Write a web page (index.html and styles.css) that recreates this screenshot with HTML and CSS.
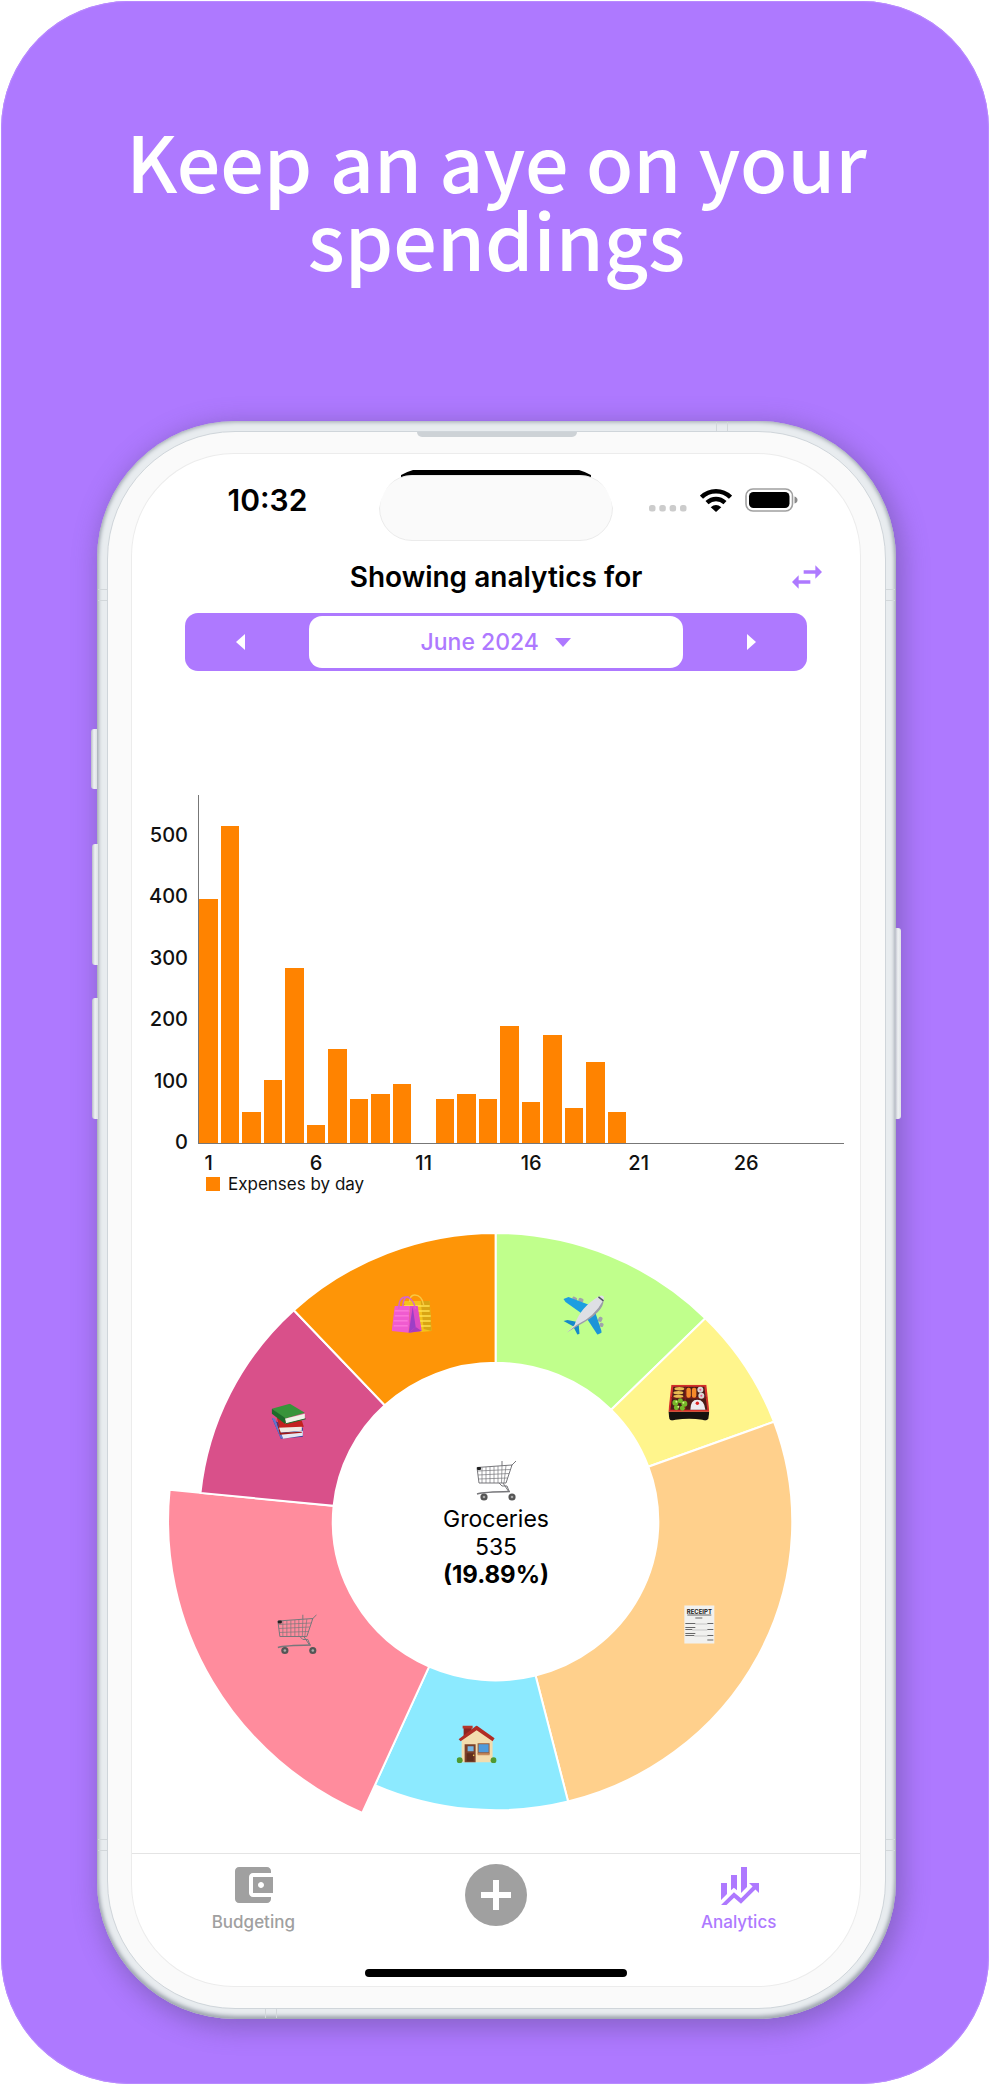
FILE: index.html
```html
<!DOCTYPE html>
<html lang="en">
<head>
<meta charset="utf-8">
<meta name="viewport" content="width=device-width, initial-scale=1">
<title>Keep an aye on your spendings</title>
<link rel="stylesheet" href="styles.css">
</head>
<body>
<svg class="defs" aria-hidden="true">
  <symbol id="cart" viewBox="0 0 40 40">
    <g fill="none" stroke="#77777b" stroke-width="1">
      <path d="M1 6.500 36 4 30 22H3z"/>
      <path stroke-width=".7" d="M1.500 10 34.500 8.500M2 14 33 12.500M2.500 18 31.500 17M6 6.500V22M10 6V22M14 6V22M18 5.500V22M22 5V22M26 5 25.500 22M30 4.500 28 22"/>
      <path d="M35 5 40 0M26 0V5M23 22l3 3h5l2 5M27 22l6 9"/>
      <path stroke-width="1.400" d="M1 33q6-2 33-2.500"/>
    </g>
    <rect x="1" y="6" width="4" height="3" rx="1" fill="#222"/>
    <g fill="#555"><circle cx="8" cy="36" r="3.600"/><circle cx="36" cy="36" r="3.600"/></g>
    <g fill="#aaa"><circle cx="8" cy="36" r="1.300"/><circle cx="36" cy="36" r="1.300"/></g>
  </symbol>
  <symbol id="bags" viewBox="0 0 40 40">
    <path d="M11 7h27l2 30-11 1z" fill="#f4c21c"/>
    <path d="M29 7h9l2 30-8-2z" fill="#d9a514"/>
    <path d="M12 12h26M12 17h26M20 22h19M20 27h19M20 32h19" stroke="#ffe04d" stroke-width="1.500"/>
    <path d="M18 8q0-7 5-7 7 0 9 10" fill="none" stroke="#f8c843" stroke-width="1.500"/>
    <path d="M3 12h15L17 39 0 37z" fill="#f05bd0"/>
    <path d="M18 12h8l4 25-13 2z" fill="#e04cc4"/>
    <path d="M21 13 17 39l7-6z" fill="#9d3fc6"/>
    <path d="M24 33l6 4-13 2z" fill="#a93cc0"/>
    <path d="M3 17h14M3 22h14M2 27h14M2 32h14" stroke="#ff86e0" stroke-width="1"/>
    <path d="M7 15Q7 3 14 3t10 12M11 12q1-10 6-9" fill="none" stroke="#d667c8" stroke-width="1.500"/>
  </symbol>
  <symbol id="plane" viewBox="0 0 42 40">
    <g fill="#a0a3ab"><rect x="10" y="2" width="5" height="3" rx="1.500" transform="rotate(25 12 3)"/><rect x="16" y="3" width="5" height="4" rx="1.500" transform="rotate(25 18 5)"/><rect x="36" y="22" width="4" height="5" rx="1.500" transform="rotate(25 38 24)"/><rect x="37" y="28" width="4" height="4" rx="1.500" transform="rotate(25 39 30)"/></g>
    <path d="M1 4 6 2l21 8-7 9L3 7z" fill="#1c9ee0"/>
    <path d="M39 38 35 40 24 23l8-8 7 21z" fill="#1c94d8"/>
    <path d="M1 26 5 25l10 2-3 5zM17 39l-2 1-4-8 5-5z" fill="#1689c9"/>
    <path d="M12 30Q18 12 37 1q6-2 4 5Q31 24 14 31L4 38z" fill="#dedfe4"/>
    <path d="M14 30Q32 22 41 5q1 12-26 26L4 38z" fill="#9b9da8"/>
    <path d="M36 2l5 4" stroke="#4f5660" stroke-width="1.500"/>
  </symbol>
  <symbol id="bento" viewBox="0 0 41 36">
    <path d="M0 27h41l-1 7q-2 3-6 1-13-2-27 0-5 2-6-1z" fill="#17120f"/>
    <path d="M3 0h35l3 27H0z" fill="#d5302b"/>
    <path d="M5 2h31l3 23H2z" fill="#4b1b17"/>
    <path d="M17 2V25M3 13H38" stroke="#7c1c18" stroke-width="1.500"/>
    <g fill="#e8bb51"><ellipse cx="11" cy="4" rx="5" ry="1.700"/><ellipse cx="10" cy="8" rx="5" ry="1.700"/><ellipse cx="10" cy="11.500" rx="5" ry="1.500"/></g>
    <g fill="#f5892a"><rect x="18" y="3" width="4.500" height="10" rx="2"/><rect x="23.500" y="3" width="4.500" height="10" rx="2"/></g>
    <g fill="#d8d5d3"><circle cx="32" cy="5" r="3"/><circle cx="33" cy="11" r="3"/></g>
    <g fill="#e58"><circle cx="32" cy="5" r="1"/><circle cx="33" cy="11" r="1"/></g>
    <g fill="#76b729"><circle cx="7" cy="18" r="3"/><circle cx="12" cy="16" r="2.500"/><circle cx="16" cy="19" r="3"/><circle cx="8" cy="23" r="2.500"/><circle cx="14" cy="23.500" r="2.500"/></g>
    <g fill="#d9f08b"><circle cx="8" cy="17" r="1"/><circle cx="15" cy="18" r="1"/><circle cx="10" cy="22" r="1"/></g>
    <path d="M22 25q0-10 7-10t8 10z" fill="#eceaf0"/><circle cx="29" cy="18.500" r="1.700" fill="#d22"/>
  </symbol>
  <symbol id="books" viewBox="0 0 35 36">
    <path d="M1 14 10 35l22-2V24L5 18z" fill="#2d3f9e"/>
    <path d="M10 30l22-3v5l-20 3z" fill="#e6e7f2"/><path d="M1 14l3 1 8 19-2 1z" fill="#6274cc"/>
    <path d="M6 14 31 17l2 6-24 3z" fill="#c3211f"/>
    <path d="M7 24l24-1v4l-22 2z" fill="#f0ebe2"/><path d="M5 15l5 14 21-1v1L9 31z" fill="#a01916"/>
    <path d="M1 5 19 0 34 9 14 15z" fill="#38943a"/>
    <path d="M14 15 34 10v5l-19 5z" fill="#f0f3e8"/><path d="M1 5v5l13 10 1-1-1-5z" fill="#1d6b2a"/>
    <path d="M15 20l20-5" stroke="#1d6b2a"/>
  </symbol>
  <symbol id="house" viewBox="0 0 40 38">
    <path d="M7 1h8v12H7z" fill="#8e2420"/><path d="M6 0h10v3H6z" fill="#b5372c"/>
    <path d="M5 15 20 3l16 12v22H5z" fill="#f3dcae"/>
    <path d="M20 0 38 13l-2 3L20 5 4 16l-2-2z" fill="#b02c25"/>
    <path d="M8 19h11v18H8z" fill="#7b402a"/><path d="M11 21h6v5h-6z" fill="#76b6e4"/><path d="M10 28h7v8h-7z" fill="#5f2d1d"/><circle cx="17" cy="30" r=".8" fill="#f4c94b"/>
    <path d="M21 18h12v11H21z" fill="#9a5b38"/><path d="M22 19h10v8H22z" fill="#4f9bdc"/><path d="M21 28h12v2H21z" fill="#c58a5d"/>
    <g fill="#4e9a33"><circle cx="3" cy="35" r="3"/><circle cx="37" cy="35" r="3"/></g>
  </symbol>
</svg>

<main class="poster">
  <h1 class="poster-title">Keep an aye on your spendings</h1>

  <div class="phone">
    <span class="key key-action"></span>
    <span class="key key-up"></span>
    <span class="key key-down"></span>
    <span class="key key-power"></span>
    <span class="band band-left band-high"></span>
    <span class="band band-right band-high"></span>
    <span class="band band-left band-low"></span>
    <span class="band band-right band-low"></span>
    <span class="band-v band-top"></span>
    <span class="band-v band-bottom"></span>
    <div class="bezel">
      <span class="speaker"></span>
      <div class="screen">
        <div class="status">
          <time class="clock">10:32</time>
          <div class="island-wrap"><div class="island"></div></div>
          <div class="status-icons">
            <svg class="dots" viewBox="0 0 38 7" aria-hidden="true"><g fill="#ccc"><rect width="6.500" height="6.500" rx="2.500"/><rect x="10.300" width="6.500" height="6.500" rx="2.500"/><rect x="20.600" width="6.500" height="6.500" rx="2.500"/><rect x="31" width="6.500" height="6.500" rx="2.500"/></g></svg>
            <svg class="wifi" viewBox="0 0 32 23" aria-label="Wi-Fi"><g fill="none" stroke="#000" stroke-width="4.400"><path d="M1.500 8.200Q7.500 2.200 16 2.200T30.500 8.200"/><path d="M7 13.700Q11 10 16 10t9 3.700"/></g><path d="M10.700 18.200Q16 13.800 21.300 18.200L16 23z"/></svg>
            <svg class="battery" viewBox="0 0 53 24" aria-label="Battery"><rect x="1" y="1" width="46.500" height="22" rx="7" fill="none" stroke="#a0a0a0" stroke-width="1.600"/><rect x="4" y="4" width="40.500" height="16" rx="4.500"/><path d="M49.500 8.500q3 1 3 3.500t-3 3.500z" fill="#8a8a8a"/></svg>
          </div>
        </div>

        <header class="header">
          <h2 class="heading">Showing analytics for</h2>
          <button class="swap" type="button" aria-label="Switch chart type">
            <svg viewBox="0 0 24 24"><path d="M6.990 11 3 15l3.990 4v-3H14v-2H6.990zM21 9l-3.990-4v3H10v2h7.010v3z"/></svg>
          </button>
        </header>

        <div class="period">
          <button class="step step-prev" type="button" aria-label="Previous month"><svg viewBox="0 0 9 16"><path d="M9 0v16L0 8z"/></svg></button>
          <label class="month">
            <select class="month-select" aria-label="Month"><option>June 2024</option></select>
            <svg class="caret" viewBox="0 0 16 9" aria-hidden="true"><path d="M0 0h16L8 9z"/></svg>
          </label>
          <button class="step step-next" type="button" aria-label="Next month"><svg viewBox="0 0 9 16"><path d="M0 0v16l9-8z"/></svg></button>
        </div>

        <section class="chart" aria-label="Expenses by day">
          <div class="y-axis"><span>500</span><span>400</span><span>300</span><span>200</span><span>100</span><span>0</span></div>
          <div class="plot">
            <i class="bar" style="height:70.100%"></i><i class="bar" style="height:91%"></i><i class="bar" style="height:9%"></i><i class="bar" style="height:18.200%"></i><i class="bar" style="height:50.300%"></i>
            <i class="bar" style="height:5.200%"></i><i class="bar" style="height:27.100%"></i><i class="bar" style="height:12.600%"></i><i class="bar" style="height:14.200%"></i><i class="bar" style="height:17%"></i>
            <i class="bar" style="height:0"></i><i class="bar" style="height:12.600%"></i><i class="bar" style="height:14%"></i><i class="bar" style="height:12.600%"></i><i class="bar" style="height:33.700%"></i>
            <i class="bar" style="height:11.800%"></i><i class="bar" style="height:31%"></i><i class="bar" style="height:10.200%"></i><i class="bar" style="height:23.200%"></i><i class="bar" style="height:9%"></i>
          </div>
          <div class="x-axis"><span>1</span><span>6</span><span>11</span><span>16</span><span>21</span><span>26</span></div>
          <div class="legend"><i class="swatch"></i>Expenses by day</div>
        </section>

        <section class="donut" aria-label="Expenses by category">
          <svg class="ring" viewBox="-328 -289 656 584">
            <g stroke="#fff" stroke-width="2">
              <path fill="#c0ff8c" d="M0-289A297 289 0 0 1 210-203.600L115.700-112A163 159 0 0 0 0-159z"/>
              <path fill="#fff58c" d="M210-203.600A297 289 0 0 1 278.700-100L152.900-55A163 159 0 0 0 115.700-112z"/>
              <path fill="#ffd08c" d="M278.700-100A297 289 0 0 1 72.600 280.200L40 154.100A163 159 0 0 0 152.900-55z"/>
              <path fill="#8ceaff" d="M72.600 280.200A297 289 0 0 1-120.900 263.800L-66.600 145.100A163 159 0 0 0 40 154.100z"/>
              <path fill="#ff8c9d" d="M-133.500 291.600A328 320 0 0 1-326.400-31.800L-162.200-15.800A163 159 0 0 0-66.600 145.100z"/>
              <path fill="#d9508a" d="M-295.500-28.700A297 289 0 0 1-202-211.700L-111-116.500A163 159 0 0 0-162.200-15.800z"/>
              <path fill="#fe9507" d="M-202-211.700A297 289 0 0 1 0-289V-159A163 159 0 0 0-111-116.500z"/>
            </g>
            <use href="#bags" x="-104" y="-228" width="40" height="40"/>
            <use href="#plane" x="67" y="-227" width="42" height="40"/>
            <use href="#bento" x="173" y="-137" width="41" height="36"/>
            <g transform="translate(189 84)">
              <path d="M0 0h30v38H0z" fill="#f1f1ef"/>
              <text x="15" y="8" text-anchor="middle" class="receipt-text">RECEIPT</text>
              <path d="M3 9.500h24M11 12.500h7M1 18h10M23 18h6M1 22h10M1 24h7M23 24h6M1 28h10M1 30h9M23 30h6M23 34.500h6" stroke="#666" stroke-width="1"/>
              <path d="M11 18.500h12M8 24.500h15M10 30.500h13" stroke="#aaa" stroke-width=".6"/>
            </g>
            <use href="#house" x="-39" y="204" width="40" height="38"/>
            <use href="#cart" x="-219" y="93" width="40" height="40"/>
            <use href="#books" x="-225" y="-118" width="35" height="36"/>
          </svg>
          <div class="selected">
            <svg class="selected-icon" viewBox="0 0 40 40" aria-hidden="true"><use href="#cart" width="40" height="40"/></svg>
            <span>Groceries</span>
            <span>535</span>
            <strong class="share">(19.89%)</strong>
          </div>
        </section>

        <nav class="tabs">
          <a class="tab" href="#budgeting">
            <svg class="tab-icon" viewBox="0 0 24 24" aria-hidden="true"><path d="M21 18v1c0 1.100-.9 2-2 2H5c-1.110 0-2-.9-2-2V5c0-1.100.89-2 2-2h14c1.100 0 2 .9 2 2v1h-9c-1.110 0-2 .9-2 2v8c0 1.100.89 2 2 2h9zm-9-2h10V8H12v8zm4-2.500c-.83 0-1.500-.67-1.500-1.500s.67-1.500 1.500-1.500 1.500.67 1.500 1.500-.67 1.500-1.500 1.500z"/></svg>
            Budgeting
          </a>
          <button class="add" type="button" aria-label="Add expense">
            <svg viewBox="0 0 62 62"><circle cx="31" cy="31" r="31" fill="#a0a0a0"/><path d="M31 16v30M16 31h30" stroke="#fff" stroke-width="6"/></svg>
          </button>
          <a class="tab tab-active" href="#analytics" aria-current="page">
            <svg class="tab-icon" viewBox="0 0 24 24" aria-hidden="true"><path d="M6 16.500 3 19.440V11h3M11 14.660l-1.570-1.340L8 14.640V7h3M16 13l-3 3V3h3M18.810 12.810 17 11h5v5l-1.790-1.790L13 21.360l-3.470-3.020L5.750 22H3l6.470-6.340L13 18.640"/></svg>
            Analytics
          </a>
        </nav>
        <div class="home"></div>
      </div>
    </div>
  </div>
</main>
</body>
</html>
```
FILE: styles.css
```css
* { box-sizing: border-box; }

body {
  margin: 0;
  background: #fff;
  font-family: Inter, "Liberation Sans", sans-serif;
  color: #000;
}

.defs { position: absolute; width: 0; height: 0; }

.poster {
  margin: 1px;
  padding: 120px 93px 65px 96px;
  background: #ae79ff;
  border-radius: 128px;
  box-shadow: inset 0 0 0 1px #b98aff;
}

.poster-title {
  margin: 0 0 144px;
  font: 500 77px/78px "Noto Sans CJK SC", "Noto Sans", sans-serif;
  color: #fff;
  text-align: center;
}

/* Phone body */
.phone {
  position: relative;
  padding: 10px;
  border-radius: 138px;
  background: #e8ecef;
  box-shadow:
    inset 0 0 4px 1px #9da5ae,
    inset 0 -3px 4px #a9aeb8,
    4px 6px 24px 4px rgba(88, 68, 130, .42);
}

.bezel {
  position: relative;
  padding: 22px 25px 22px 24px;
  border: 1px solid #cfd5da;
  border-radius: 128px;
  background: #fafafa;
}

.screen {
  padding-bottom: 9px;
  border-radius: 102px;
  background: #fff;
  box-shadow: 0 0 0 1px #ececec;
}

.speaker {
  position: absolute;
  top: 0;
  left: 50%;
  width: 160px;
  height: 5px;
  margin-left: -80px;
  border-radius: 0 0 5px 5px;
  background: #cdd2d6;
}

.key {
  position: absolute;
  width: 6px;
  border-radius: 3px 0 0 3px;
  background: linear-gradient(90deg, #b9bcc8, #eef1f3 50%, #dfe3e6);
}
.key-action { left: -6px; top: 308px; height: 60px; }
.key-up { left: -5px; top: 423px; height: 121px; }
.key-down { left: -5px; top: 577px; height: 121px; }
.key-power { right: -5px; top: 507px; height: 191px; border-radius: 0 3px 3px 0; }

.band {
  position: absolute;
  width: 10px;
  height: 12px;
  border: solid #d2d7da;
  border-width: 1px 0;
}
.band-left { left: 1px; }
.band-right { right: 1px; }
.band-high { top: 168px; }
.band-low { bottom: 168px; }

.band-v {
  position: absolute;
  width: 12px;
  height: 9px;
  border: solid #d2d7da;
  border-width: 0 1px;
}
.band-top { top: 1px; right: 168px; }
.band-bottom { bottom: 1px; left: 168px; }

/* Status bar */
.status {
  display: grid;
  grid-template-columns: 1fr 234px 1fr;
  height: 87px;
  padding-top: 16px;
}

.clock {
  justify-self: center;
  margin-top: 12px;
  padding-left: 24px;
  font-size: 30px;
  font-weight: 600;
  line-height: 36px;
}

.island-wrap {
  padding-top: 5px;
  background: linear-gradient(#000, #000) top center / 190px 30px no-repeat;
  clip-path: path("M0 71V38Q6 8 34 0H200Q228 8 234 38V71z");
}

.island {
  height: 66px;
  border: 1px solid #ebebeb;
  border-radius: 33px;
  background: #fafafa;
}

.status-icons {
  display: flex;
  align-items: flex-end;
  justify-content: flex-end;
  gap: 13px;
  height: 42px;
  padding-right: 62px;
}
.dots { width: 38px; height: 7px; }
.wifi { width: 32px; height: 23px; }
.battery { width: 53px; height: 24px; }

/* Header */
.header {
  display: grid;
  grid-template-columns: 1fr auto 1fr;
  align-items: center;
  padding: 16px 33px;
}

.heading {
  grid-column: 2;
  margin: 0;
  font-size: 28px;
  font-weight: 600;
  line-height: 40px;
}

.swap {
  justify-self: end;
  width: 40px;
  height: 40px;
  padding: 0;
  border: 0;
  background: none;
}
.swap svg { display: block; fill: #ae79ff; }

/* Month switcher */
.period {
  display: grid;
  grid-template-columns: 1fr 3fr 1fr;
  margin: 0 53px;
  padding: 3px 0;
  border-radius: 13px;
  background: #ae79ff;
}

.step {
  padding: 0;
  border: 0;
  background: none;
}
.step-prev { padding-right: 13px; }
.step-next { padding-left: 13px; }
.step svg { width: 9px; height: 16px; fill: #fff; vertical-align: middle; }

.month {
  display: flex;
  align-items: center;
  justify-content: center;
  gap: 16px;
  height: 52px;
  border-radius: 13px;
  background: #fff;
}

.month-select {
  appearance: none;
  padding: 0;
  border: 0;
  background: none;
  color: #ae79ff;
  font: 500 23px/28px Inter, "Liberation Sans", sans-serif;
}
.caret { width: 16px; height: 9px; fill: #ae79ff; }

/* Bar chart */
.chart {
  display: grid;
  grid-template-columns: 66px 1fr;
  margin: 124px 16px 40px 0;
  font-size: 20px;
  font-weight: 500;
  line-height: 24px;
  color: #111;
}

.y-axis {
  grid-row: 1 / 3;
  display: flex;
  flex-direction: column;
  justify-content: space-between;
  padding: 28px 10px 21px 0;
  text-align: right;
}

.plot {
  display: grid;
  grid-template-columns: repeat(30, 1fr);
  align-items: end;
  gap: 3px;
  height: 349px;
  padding-right: 3px;
  border: solid #777;
  border-width: 0 0 1px 1px;
}
.bar { background: #ff8300; }

.x-axis {
  display: grid;
  grid-template-columns: repeat(6, 1fr);
  padding: 7px 0 0 1px;
}
.x-axis span { display: flex; justify-content: center; width: 18%; }

.legend {
  grid-column: 2;
  display: flex;
  align-items: center;
  gap: 8px;
  padding-left: 8px;
  font-size: 17px;
  font-weight: 400;
  line-height: 18px;
}
.swatch { width: 14px; height: 14px; background: #ff8300; }

/* Category ring */
.donut {
  display: grid;
  place-items: center;
  margin-bottom: 37px;
}
.ring { grid-area: 1 / 1; width: 90%; }
.receipt-text { font: 700 6px Inter, sans-serif; fill: #222; }

.selected {
  grid-area: 1 / 1;
  display: flex;
  flex-direction: column;
  align-items: center;
  font-size: 23px;
  line-height: 28px;
}
.selected-icon { width: 40px; height: 40px; margin-bottom: 4px; }
.share { font-size: 24px; }

/* Tab bar */
.tabs {
  display: grid;
  grid-template-columns: repeat(3, 1fr);
  justify-items: center;
  align-items: start;
  padding-top: 7px;
  border-top: 1px solid #e4e4e4;
}

.tab {
  display: flex;
  flex-direction: column;
  align-items: center;
  gap: 3px;
  color: #a0a0a0;
  font-size: 17px;
  font-weight: 500;
  line-height: 20px;
  text-decoration: none;
}
.tab-active { color: #ae79ff; }
.tab-icon { width: 48px; height: 48px; fill: currentColor; }

.add {
  width: 62px;
  height: 62px;
  margin-top: 3px;
  padding: 0;
  border: 0;
  background: none;
}
.add svg { display: block; }

.home {
  width: 36%;
  height: 8px;
  margin: 37px auto 0;
  border-radius: 4px;
  background: #000;
}
```
